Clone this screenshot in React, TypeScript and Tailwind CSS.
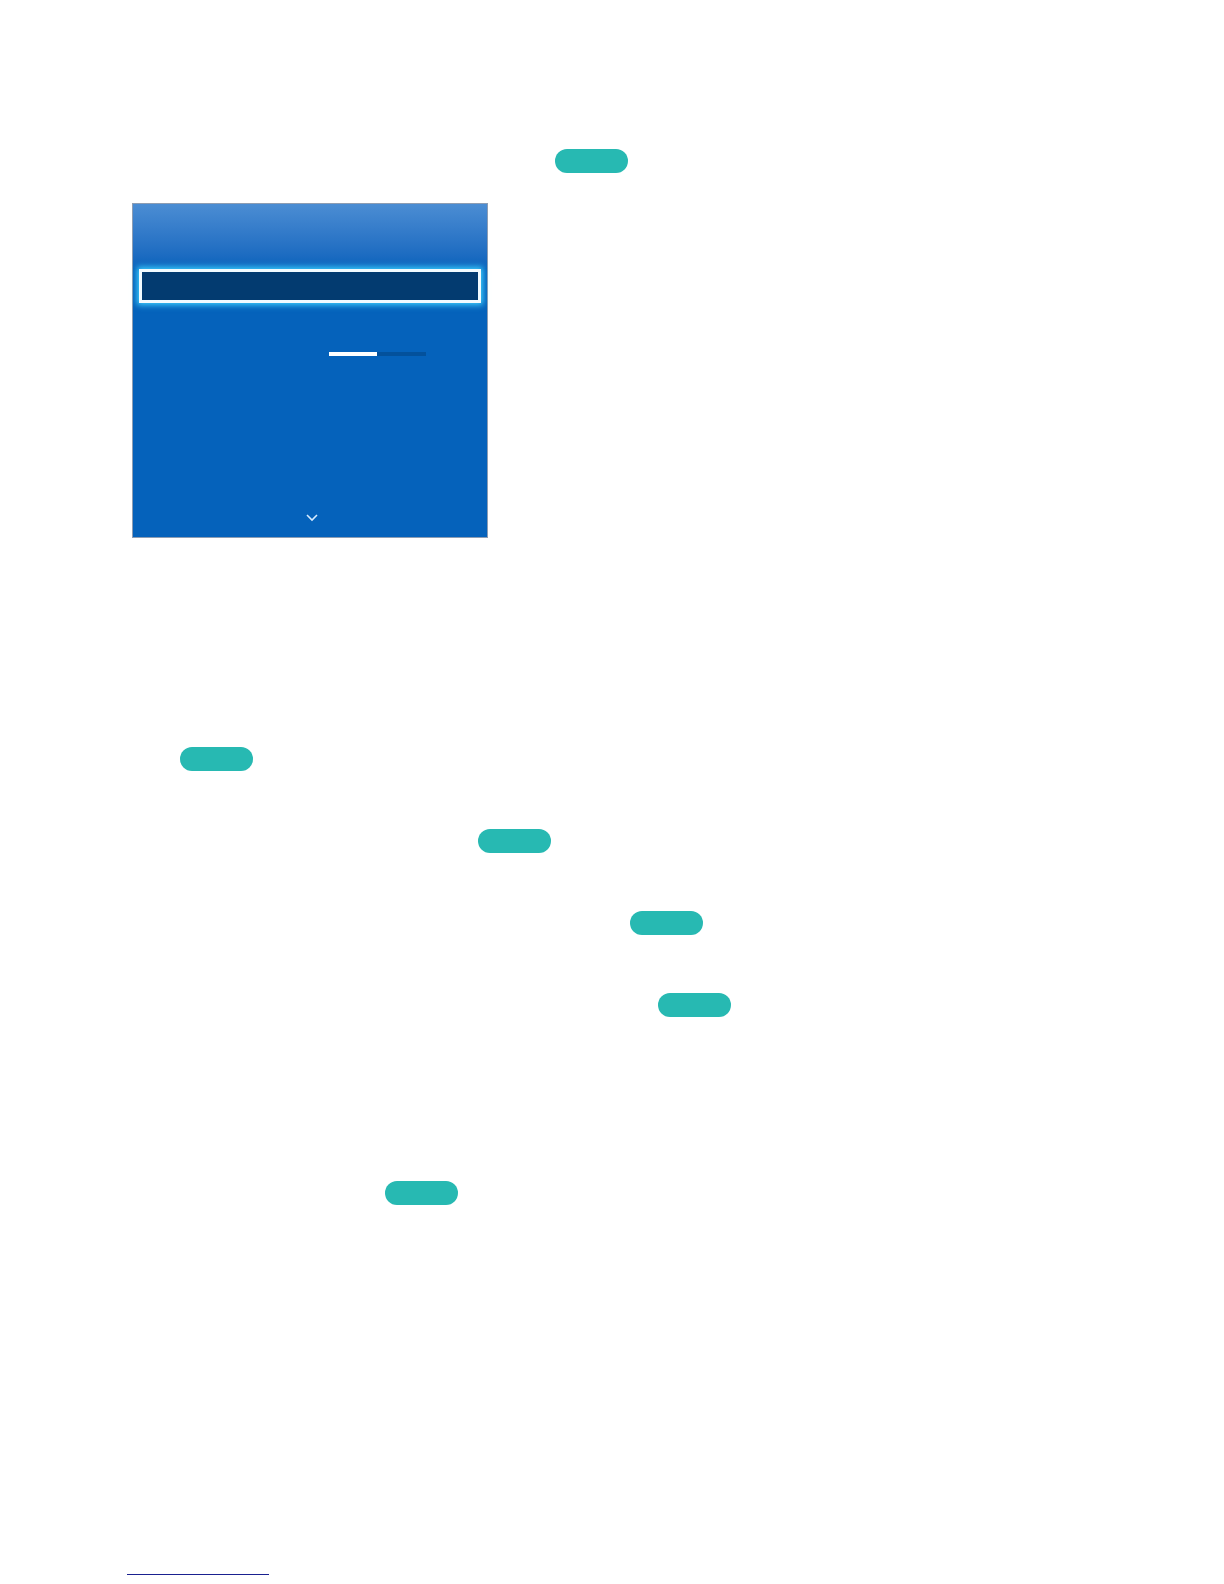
import React from "react";

const Pill: React.FC<{ left: number; top: number }> = ({ left, top }) => (
  <div style={{ marginLeft: left, marginTop: top }} className="h-[24px] w-[73px] rounded-full bg-[#27b9b2]" />
);

const TvMenu: React.FC = () => (
  <div className="ml-[132px] mt-[30px] w-[356px] h-[335px] border border-[#8d9db3] bg-[#0562bb] flex flex-col">
    {/* header gradient */}
    <div className="h-[64px] bg-gradient-to-b from-[#4b8dd3] via-[#2f78c8] to-[#0a63bc]" />
    {/* selected row */}
    <div className="px-[6px] mt-[1px]">
      <div className="h-[34px] border-[3px] border-[#f2fbff] bg-[#033b70] shadow-[0_0_6px_2px_#3fd0ff]" />
    </div>
    {/* slider row */}
    <div className="mt-[49px] pl-[196px] flex">
      <div className="w-[97px] h-[4px] bg-[#03519c] flex">
        <div className="w-[48px] h-full bg-white" />
      </div>
    </div>
    <div className="flex-1" />
    <div className="flex justify-center pb-[15px] pl-[4px]">
      <svg width="14" height="9" viewBox="0 0 14 9" fill="none">
        <path d="M2 2l5 5 5-5" stroke="#d8ecff" strokeWidth="1.6" />
      </svg>
    </div>
  </div>
);

const App: React.FC = () => {
  return (
    <div className="w-[1224px] h-[1584px] bg-white overflow-hidden flex flex-col" style={{ fontFamily: '"Liberation Sans", Arial, sans-serif' }}>
      <Pill left={555} top={149} />
      <TvMenu />
      <Pill left={180} top={209} />
      <Pill left={478} top={58} />
      <Pill left={630} top={58} />
      <Pill left={658} top={58} />
      <Pill left={385} top={164} />
      <div className="ml-[127px] mt-[369px] w-[142px] h-[1px] bg-[#1a2190]" />
    </div>
  );
};

export default App;
